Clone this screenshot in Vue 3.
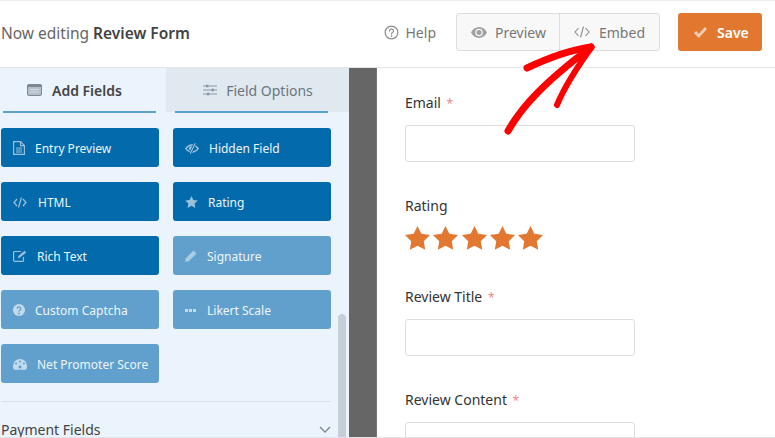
<script setup>
const fields = [
  { label: 'Entry Preview', icon: 'doc', gap: 8 },
  { label: 'Hidden Field', icon: 'eyeoff', gap: 10 },
  { label: 'HTML', icon: 'code', gap: 11 },
  { label: 'Rating', icon: 'star', gap: 9 },
  { label: 'Rich Text', icon: 'edit', gap: 10 },
  { label: 'Signature', icon: 'pen', gap: 8, off: true },
  { label: 'Custom Captcha', icon: 'question', gap: 8, off: true },
  { label: 'Likert Scale', icon: 'dots', gap: 8, off: true },
  { label: 'Net Promoter Score', icon: 'gauge', gap: 10, off: true },
]
const stars = [1, 2, 3, 4, 5]
</script>

<template>
  <div class="page">
    <header class="top">
      <div class="title">Now editing <strong>Review Form</strong></div>
      <div class="actions">
        <div class="help">
          <svg width="15" height="15" viewBox="0 0 16 16" fill="none" stroke="#8c8c8c" stroke-width="1.3"><circle cx="8" cy="8" r="6.8"/><path d="M5.900 6.300a2.100 2.100 0 1 1 3.200 1.800c-.7.400-1.100.800-1.100 1.600" stroke-linecap="round"/><circle cx="8" cy="11.800" r=".9" fill="#8c8c8c" stroke="none"/></svg>
          <span>Help</span>
        </div>
        <div class="group">
          <div class="gbtn prev">
            <svg width="16" height="11" viewBox="0 0 16 11" fill="#a0a0a0"><path fill-rule="evenodd" d="M8 0c3.500 0 6.400 2.200 8 5.500C14.400 8.800 11.500 11 8 11S1.600 8.800 0 5.500C1.600 2.200 4.500 0 8 0zm0 1.700a3.800 3.800 0 1 0 0 7.600 3.800 3.800 0 0 0 0-7.600z"/><circle cx="8" cy="5.500" r="2.500"/></svg>
            <span>Preview</span>
          </div>
          <div class="gbtn emb">
            <svg width="16" height="12" viewBox="0 0 16 12" fill="none" stroke="#8c8c8c" stroke-width="1.100"><path d="M4.500 2 1 6l3.500 4M11.500 2 15 6l-3.500 4M9.500 .5l-3 11"/></svg>
            <span>Embed</span>
          </div>
        </div>
        <div class="save">
          <svg width="13" height="11" viewBox="0 0 13 11" fill="#f3cdb2"><path d="M0 6.200 2.100 4l2.700 2.700L10.900 0 13 2.100 4.800 11z"/></svg>
          <span>Save</span>
        </div>
      </div>
    </header>

    <div class="body">
      <aside class="side">
        <div class="tabs">
          <div class="tab on">
            <svg width="15" height="12" viewBox="0 0 15 12"><rect x=".5" y=".5" width="14" height="11" rx="1.500" fill="#b4bfca" stroke="#7d8894"/><rect x=".5" y=".5" width="14" height="2.500" fill="#7d8894"/><path d="M3 5.500h9M3 8h9" stroke="#d5dce3"/></svg>
            <span>Add Fields</span>
          </div>
          <div class="tab">
            <svg width="14" height="12" viewBox="0 0 14 12" fill="none" stroke="#8a96a3" stroke-width="1.200"><path d="M0 2h14M0 6h14M0 10h14"/><rect x="3" y=".7" width="2.400" height="2.600" fill="#8a96a3" stroke="none"/><rect x="8.500" y="4.700" width="2.400" height="2.600" fill="#8a96a3" stroke="none"/><rect x="4" y="8.700" width="2.400" height="2.600" fill="#8a96a3" stroke="none"/></svg>
            <span>Field Options</span>
          </div>
        </div>
        <div class="scroll">
          <div class="cut"><i></i><i></i></div>
          <div class="grid">
            <div v-for="f in fields" :key="f.label" class="fbtn" :class="{ off: f.off }">
              <span class="ico">
                <svg v-if="f.icon === 'doc'" width="12" height="14" viewBox="0 0 12 14" fill="none" stroke="#9cc0dc" stroke-width="1.200"><path d="M.6.6h7l3.800 3.800v9H.6z"/><path d="M7.500.6v4h3.900M3 7h6M3 9h6M3 11h6"/></svg>
                <svg v-else-if="f.icon === 'eyeoff'" width="14" height="11" viewBox="0 0 15 11" fill="#9cc0dc"><path fill-rule="evenodd" d="M7.500 1c3 0 5.800 1.800 7.500 4.500C13.300 8.200 10.500 10 7.500 10S1.700 8.200 0 5.500C1.700 2.800 4.500 1 7.500 1zm0 1.500c-2.200 0-4.200 1.200-5.600 3 1.400 1.800 3.400 3 5.600 3s4.200-1.200 5.600-3c-1.400-1.800-3.400-3-5.600-3z"/><circle cx="6.500" cy="5.500" r="2.300"/><path d="M11 0 5.600 11" stroke="#036aab" stroke-width="3"/><path d="M11 0 5.600 11" stroke="#9cc0dc" stroke-width="1.200"/></svg>
                <svg v-else-if="f.icon === 'code'" width="14" height="11" viewBox="0 0 14 11" fill="none" stroke="#9cc0dc" stroke-width="1.200"><path d="M4 2 1 5.500 4 9M10 2l3 3.500L10 9M8.500.5l-3 10"/></svg>
                <svg v-else-if="f.icon === 'star'" width="13" height="12" viewBox="0 0 24 23" fill="#9cc0dc"><path d="M12 0l3.700 7.500 8.300 1.200-6 5.800 1.400 8.300L12 18.900l-7.400 3.900L6 14.500 0 8.700l8.300-1.200z"/></svg>
                <svg v-else-if="f.icon === 'edit'" width="14" height="12" viewBox="0 0 14 12" fill="none" stroke="#9cc0dc" stroke-width="1.200"><path d="M10.500 7v3.400a1 1 0 0 1-1 1H1.600a1 1 0 0 1-1-1V2.500a1 1 0 0 1 1-1H8"/><path d="M4.800 8.200 5.400 6 11.500.8l1.700 1.700L7 7.600z" fill="#9cc0dc" stroke="none"/></svg>
                <svg v-else-if="f.icon === 'pen'" width="12" height="12" viewBox="0 0 12 12" fill="#a8cde3"><path d="M8.500.5 11.500 3.500 3.800 11.200 0 12 .8 8.200z"/></svg>
                <svg v-else-if="f.icon === 'question'" width="12" height="12" viewBox="0 0 16 16"><circle cx="8" cy="8" r="8" fill="#c1dbeb"/><path d="M5.600 6.300a2.400 2.400 0 1 1 3.600 2c-.8.500-1.200.8-1.200 1.700" fill="none" stroke="#60a0cc" stroke-width="1.800"/><circle cx="8" cy="12.600" r="1.200" fill="#60a0cc"/></svg>
                <svg v-else-if="f.icon === 'dots'" width="11" height="3" viewBox="0 0 11 3" fill="#c1dbeb"><rect width="3" height="3"/><rect x="4" width="3" height="3"/><rect x="8" width="3" height="3"/></svg>
                <svg v-else width="14" height="12" viewBox="0 0 14 12"><path d="M7 1a7 7 0 0 1 7 7c0 1.300-.4 2.700-1 3.800H1C.4 10.700 0 9.300 0 8a7 7 0 0 1 7-7z" fill="#c1dbeb"/><circle cx="7" cy="3.500" r="1" fill="#60a0cc"/><circle cx="3" cy="5.500" r="1" fill="#60a0cc"/><circle cx="11" cy="5.500" r="1" fill="#60a0cc"/><circle cx="7" cy="9" r="1.500" fill="#60a0cc"/></svg>
              </span>
              <span class="lbl" :style="{ marginLeft: f.gap + 'px' }">{{ f.label }}</span>
            </div>
          </div>
          <div class="divider"></div>
          <div class="pay">
            <span>Payment Fields</span>
            <svg width="12" height="7" viewBox="0 0 12 7" fill="none" stroke="#7d8894" stroke-width="1.300"><path d="M1 1l5 5 5-5"/></svg>
          </div>
          <div class="bar"></div>
        </div>
      </aside>
      <div class="strip"></div>
      <main class="form">
        <label class="flabel first">Email <em>*</em></label>
        <div class="input"></div>
        <label class="flabel rate">Rating</label>
        <div class="stars">
          <svg v-for="s in stars" :key="s" width="25" height="24" viewBox="0 0 24 23" fill="#e27730"><path d="M12 0l3.700 7.500 8.300 1.200-6 5.800 1.400 8.300L12 18.900l-7.400 3.900L6 14.500 0 8.700l8.300-1.200z"/></svg>
        </div>
        <label class="flabel title2">Review Title <em>*</em></label>
        <div class="input"></div>
        <label class="flabel content">Review Content <em>*</em></label>
        <div class="input"></div>
      </main>
    </div>

    <svg class="arrow" width="110" height="105" viewBox="495 35 110 105" fill="none" stroke="#ff0000" stroke-linecap="round" stroke-linejoin="round">
      <path d="M508 131C522 106 545 82 591 47" stroke-width="7"/>
      <path d="M527 68C548 58 570 50 591 47" stroke-width="7"/>
      <path d="M557 105C564 88 578 66 591 48" stroke-width="6"/>
    </svg>
  </div>
</template>

<style>
html, body { margin: 0; background: #fff; }
</style>

<style scoped>
.page {
  position: relative;
  width: 775px;
  height: 438px;
  overflow: hidden;
  background: #fff;
  font-family: "Noto Sans", sans-serif;
  display: flex;
  flex-direction: column;
  box-sizing: border-box;
  border-top: 1px solid #eee;
  border-bottom: 1px solid #e4e4e4;
}
.top {
  height: 67px;
  flex: none;
  box-sizing: border-box;
  border-bottom: 1px solid #e4e6e9;
  display: flex;
  align-items: center;
  justify-content: space-between;
  padding: 0 13px 4px 1px;
}
.title { font-size: 15.500px; color: #666; margin-top: 2px; }
.title strong { color: #444; font-weight: 600; }
.actions { display: flex; align-items: center; }
.help {
  display: flex;
  align-items: center;
  gap: 7px;
  font-size: 14px;
  color: #777;
  margin-right: 20px;
}
.group {
  display: flex;
  height: 38px;
  box-sizing: border-box;
  border: 1px solid #ddd;
  border-radius: 3px;
  background: #f8f8f8;
  margin-right: 18px;
}
.gbtn {
  display: flex;
  align-items: center;
  font-size: 14px;
  color: #777;
  box-sizing: border-box;
}
.prev { width: 103px; padding-left: 14px; gap: 8px; border-right: 1px solid #ddd; }
.emb { width: 99px; padding-left: 14px; gap: 9px; }
.save {
  width: 84px;
  height: 38px;
  box-sizing: border-box;
  padding-left: 16px;
  border-radius: 3px;
  background: #e27730;
  color: #fff;
  font-size: 14px;
  font-weight: 600;
  display: flex;
  align-items: center;
  gap: 10px;
}
.body { flex: 1; display: flex; min-height: 0; }
.side { width: 349px; flex: none; background: #ebf3fc; display: flex; flex-direction: column; min-height: 0; }
.tabs { display: flex; height: 44px; flex: none; }
.tab {
  box-sizing: border-box;
  display: flex;
  align-items: center;
  justify-content: center;
  gap: 9px;
  font-size: 14px;
  color: #6b7580;
  background: #e0e8f0;
  flex: 1;
}
.tab.on {
  color: #444;
  font-weight: 600;
  background: #ebf3fc;
  flex: 0 0 167px;
  border-right: 1px solid #dfe7ef;
  justify-content: flex-start;
  padding-left: 27px;
  gap: 10px;
}
.scroll { position: relative; flex: 1; min-height: 0; padding: 0 0 0 1px; }
.cut { display: flex; gap: 19px; height: 2px; margin-left: 2px; margin-top: -1px; }
.cut i { width: 153px; height: 1.500px; background: #5a9fd0; }
.grid {
  display: grid;
  grid-template-columns: 158px 158px;
  column-gap: 14px;
  row-gap: 15px;
  margin-top: 15px;
}
.fbtn {
  height: 39px;
  box-sizing: border-box;
  background: #036aab;
  border-radius: 3px;
  display: flex;
  align-items: center;
  padding: 1px 0 0 12px;
  font-size: 12px;
  color: #eef5fa;
}
.fbtn.off { background: #61a0cc; }
.ico { display: flex; align-items: center; width: 14px; flex: none; }
.divider { height: 1px; width: 330px; background: #d9e1e9; margin-top: 18px; }
.pay {
  width: 330px;
  display: flex;
  align-items: center;
  justify-content: space-between;
  font-size: 14px;
  color: #444;
  margin-top: 18px;
  height: 19px;
}
.bar {
  position: absolute;
  left: 338px;
  top: 202px;
  width: 8px;
  height: 140px;
  background: #c6cfd8;
  border-radius: 4px 4px 0 0;
}
.strip { width: 28px; flex: none; background: #666; border-right: 1px solid #777; box-sizing: border-box; }
.form { flex: 1; padding: 0 0 0 28px; }
.flabel { display: block; font-size: 14px; line-height: 19px; font-weight: 400; color: #333; }
.flabel em { color: #e88; font-style: normal; margin-left: 2px; font-size: 12px; }
.first { margin-top: 25px; }
.rate { margin-top: 34px; }
.title2 { margin-top: 37px; }
.content { margin-top: 34px; }
.input {
  box-sizing: border-box;
  width: 230px;
  height: 37px;
  margin-top: 12px;
  border: 1px solid #ddd;
  border-radius: 3px;
  background: #fff;
}
.stars { display: flex; gap: 3.300px; margin-top: 11px; }
.arrow { position: absolute; left: 495px; top: 34px; }
</style>
